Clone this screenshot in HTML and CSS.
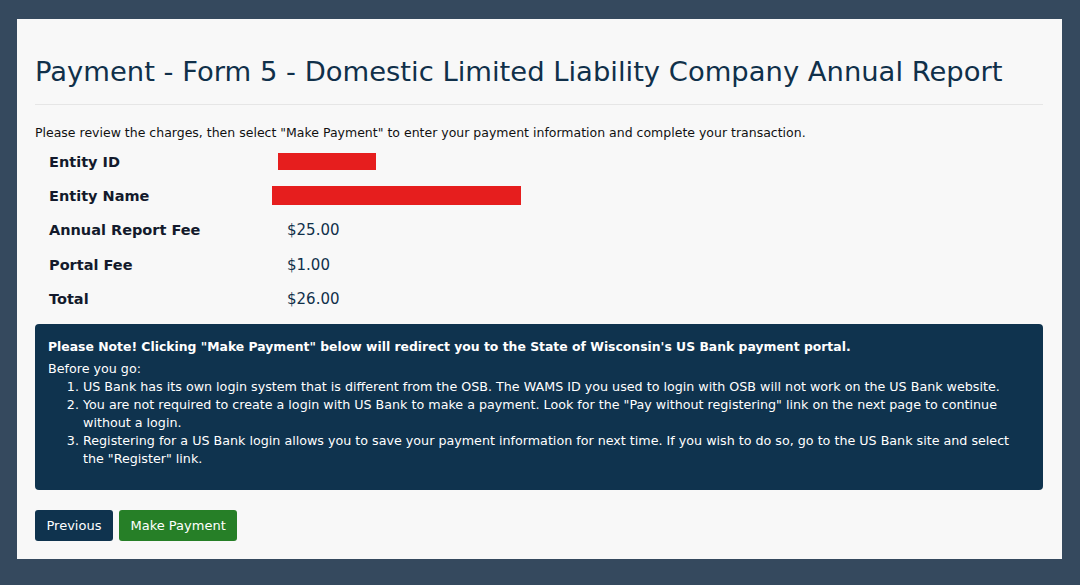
FILE: index.html
```html
<!DOCTYPE html>
<html>
<head>
<meta charset="utf-8">
<link rel="stylesheet" href="styles.css">
</head>
<body>
<div class="card">
  <h1 class="title">Payment - Form 5 - Domestic Limited Liability Company Annual Report</h1>
  <hr class="rule">
  <p class="intro">Please review the charges, then select "Make Payment" to enter your payment information and complete your transaction.</p>
  <div class="rows">
    <div class="row"><span class="label">Entity ID</span><span class="value"><span class="redact redact-id"></span></span></div>
    <div class="row"><span class="label">Entity Name</span><span class="value"><span class="redact redact-name"></span></span></div>
    <div class="row"><span class="label">Annual Report Fee</span><span class="value">$25.00</span></div>
    <div class="row"><span class="label">Portal Fee</span><span class="value">$1.00</span></div>
    <div class="row"><span class="label">Total</span><span class="value">$26.00</span></div>
  </div>
  <div class="note">
    <p class="note-head">Please Note! Clicking "Make Payment" below will redirect you to the State of Wisconsin's US Bank payment portal.</p>
    <p class="note-sub">Before you go:</p>
    <ol class="note-list">
      <li>US Bank has its own login system that is different from the OSB. The WAMS ID you used to login with OSB will not work on the US Bank website.</li>
      <li>You are not required to create a login with US Bank to make a payment. Look for the "Pay without registering" link on the next page to continue without a login.</li>
      <li>Registering for a US Bank login allows you to save your payment information for next time. If you wish to do so, go to the US Bank site and select the "Register" link.</li>
    </ol>
  </div>
  <div class="actions">
    <button class="btn btn-prev">Previous</button>
    <button class="btn btn-pay">Make Payment</button>
  </div>
</div>
</body>
</html>
```
FILE: styles.css
```css
html, body { margin: 0; padding: 0; }
body {
  background: #35495e;
  font-family: "DejaVu Sans", Verdana, sans-serif;
  color: #111;
  padding: 19px 18px 0 17px;
  height: 585px;
  box-sizing: border-box;
}
.card {
  background: #f8f8f8;
  height: 540px;
  box-sizing: border-box;
  padding: 35px 19px 0 18px;
}
.title {
  margin: 0;
  font-weight: normal;
  font-size: 27.4px;
  line-height: 36px;
  color: #10304a;
}
.rule {
  border: 0;
  border-top: 1px solid #e6e6e6;
  margin: 14px 0 0 0;
}
.intro {
  margin: 20px 0 0 0;
  font-size: 12.5px;
  line-height: 16px;
  color: #111;
}
.rows { padding-left: 14px; margin-top: 3.5px; }
.row {
  display: flex;
  align-items: center;
  height: 34.3px;
}
.label {
  width: 238px;
  font-weight: bold;
  font-size: 14.5px;
  color: #131a2c;
}
.value { font-size: 15px; color: #10304a; }
.redact { display: block; background: #e61e1e; }
.redact-id { width: 98px; height: 17.5px; margin-left: -9px; }
.redact-name { width: 249px; height: 19px; margin-left: -15px; }
.note {
  margin-top: 8px;
  background: #0f334e;
  border-radius: 4px;
  color: #fff;
  padding: 14px 13px 22px 13px;
  font-size: 12.7px;
  line-height: 18px;
}
.note-head { margin: 0; font-weight: bold; font-size: 12.4px; }
.note-sub { margin: 4px 0 0 0; }
.note-list { margin: 0; padding-left: 35px; }
.actions { margin-top: 20px; display: flex; gap: 6px; }
.btn {
  font-family: inherit;
  font-size: 13px;
  color: #fff;
  border: 0;
  border-radius: 3px;
  height: 31px;
  padding: 0 11.5px;
}
.btn-prev { background: #0f334e; }
.btn-pay { background: #267f27; }
```
